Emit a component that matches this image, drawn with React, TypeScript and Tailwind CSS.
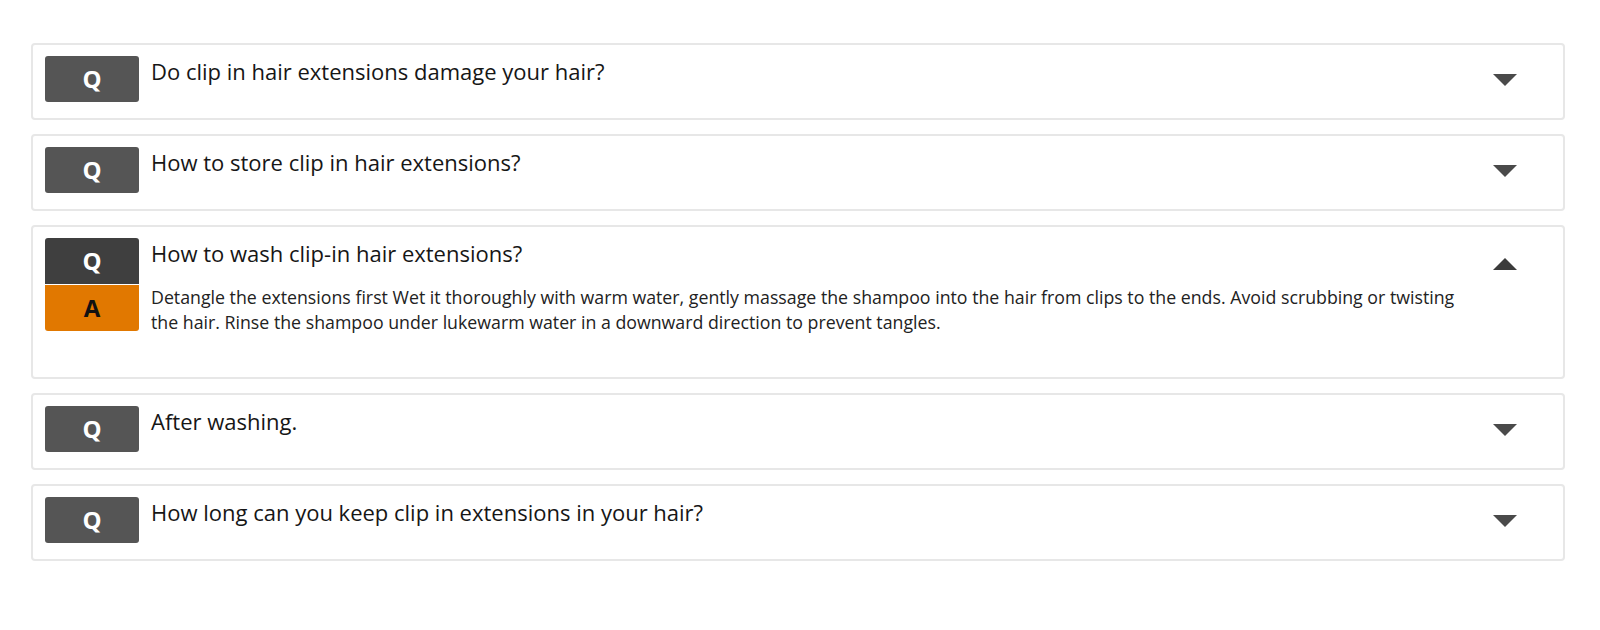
import { useState } from 'react';

interface FaqItem {
  question: string;
  answer: string;
}

const FAQ_ITEMS: FaqItem[] = [
  {
    question: 'Do clip in hair extensions damage your hair?',
    answer:
      'Clip in hair extensions are the safest option. They do not need glue, heat or chemicals and can be removed at any time.',
  },
  {
    question: 'How to store clip in hair extensions?',
    answer: 'Keep them in a dry, cool place, away from direct sunlight, in their original box or a silk bag.',
  },
  {
    question: 'How to wash clip-in hair extensions?',
    answer:
      'Detangle the extensions first Wet it thoroughly with warm water, gently massage the shampoo into the hair from clips to the ends. Avoid scrubbing or twisting the hair. Rinse the shampoo under lukewarm water in a downward direction to prevent tangles.',
  },
  {
    question: 'After washing.',
    answer: 'Gently pat the hair with a towel and let it air dry on a flat surface.',
  },
  {
    question: 'How long can you keep clip in extensions in your hair?',
    answer: 'Take them out before you go to sleep. Wearing them for a full day is fine.',
  },
];

const Caret = ({ open }: { open: boolean }) => (
  <svg width="24" height="12" viewBox="0 0 24 12" className={open ? 'fill-[#3b3b3b]' : 'fill-[#4a4a4a]'}>
    {open ? <polygon points="12,0 24,12 0,12" /> : <polygon points="0,0 24,0 12,12" />}
  </svg>
);

const FaqCard = ({ item, open, onToggle }: { item: FaqItem; open: boolean; onToggle: () => void }) => (
  <div
    onClick={onToggle}
    className={`flex cursor-pointer rounded-[4px] border-2 border-[#e7e7e7] bg-white pl-[12px] pt-[11px] ${
      open ? 'pb-[43px]' : 'pb-[16px]'
    }`}
  >
    <div className="flex flex-1 flex-col gap-[1px]">
      <div className="flex">
        <div
          className={`flex h-[46px] w-[94px] shrink-0 items-center justify-center rounded-[3px] text-[24px] font-bold text-white ${
            open ? 'rounded-b-none bg-[#3f3f3f]' : 'bg-[#555555]'
          }`}
        >
          Q
        </div>
        <p className="ml-[12px] pt-[1px] text-[22px] leading-[28px] text-[#161616]">{item.question}</p>
      </div>
      {open && (
        <div className="flex">
          <div className="flex h-[46px] w-[94px] shrink-0 items-center justify-center rounded-[3px] rounded-t-none bg-[#e17800] text-[24px] font-bold text-[#111111]">
            A
          </div>
          <p className="ml-[12px] text-[17.75px] leading-[24.5px] text-[#222222]">{item.answer}</p>
        </div>
      )}
    </div>
    <div className={`w-[90px] shrink-0 pl-[20px] ${open ? 'pt-[20px]' : 'pt-[18px]'}`}>
      <Caret open={open} />
    </div>
  </div>
);

export default function App() {
  const [openIndex, setOpenIndex] = useState<number | null>(2);

  return (
    <div className="min-h-[630px] bg-white px-[31px] pt-[43px] font-['Open_Sans',sans-serif]">
      <div className="flex w-[1534px] flex-col gap-[14px]">
        {FAQ_ITEMS.map((item, i) => (
          <FaqCard
            key={item.question}
            item={item}
            open={openIndex === i}
            onToggle={() => setOpenIndex(openIndex === i ? null : i)}
          />
        ))}
      </div>
    </div>
  );
}
